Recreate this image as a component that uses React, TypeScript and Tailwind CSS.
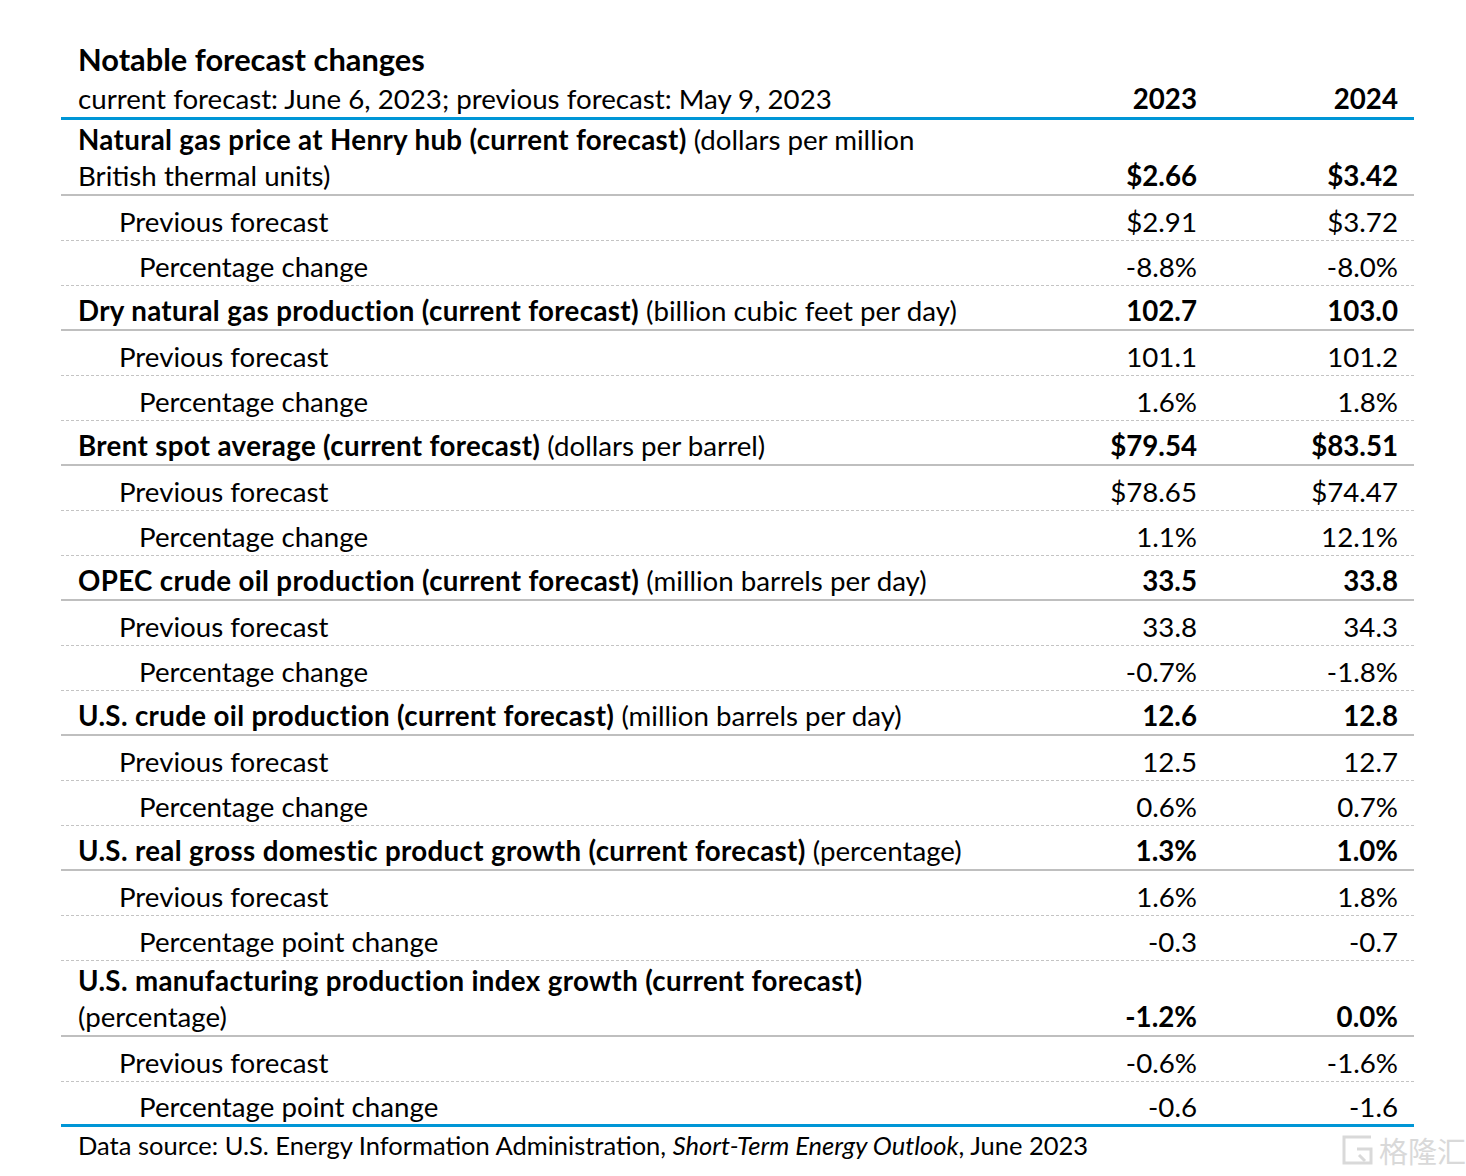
import React from "react";

type Row =
  | { kind: "main"; bold: string; rest: string; wrap?: string; v: [string, string] }
  | { kind: "prev"; label: string; v: [string, string] }
  | { kind: "pct"; label: string; v: [string, string]; last?: boolean };

const rows: Row[] = [
  { kind: "main", bold: "Natural gas price at Henry hub (current forecast)", rest: " (dollars per million", wrap: "British thermal units)", v: ["$2.66", "$3.42"] },
  { kind: "prev", label: "Previous forecast", v: ["$2.91", "$3.72"] },
  { kind: "pct", label: "Percentage change", v: ["-8.8%", "-8.0%"] },
  { kind: "main", bold: "Dry natural gas production (current forecast)", rest: " (billion cubic feet per day)", v: ["102.7", "103.0"] },
  { kind: "prev", label: "Previous forecast", v: ["101.1", "101.2"] },
  { kind: "pct", label: "Percentage change", v: ["1.6%", "1.8%"] },
  { kind: "main", bold: "Brent spot average (current forecast)", rest: " (dollars per barrel)", v: ["$79.54", "$83.51"] },
  { kind: "prev", label: "Previous forecast", v: ["$78.65", "$74.47"] },
  { kind: "pct", label: "Percentage change", v: ["1.1%", "12.1%"] },
  { kind: "main", bold: "OPEC crude oil production (current forecast)", rest: " (million barrels per day)", v: ["33.5", "33.8"] },
  { kind: "prev", label: "Previous forecast", v: ["33.8", "34.3"] },
  { kind: "pct", label: "Percentage change", v: ["-0.7%", "-1.8%"] },
  { kind: "main", bold: "U.S. crude oil production (current forecast)", rest: " (million barrels per day)", v: ["12.6", "12.8"] },
  { kind: "prev", label: "Previous forecast", v: ["12.5", "12.7"] },
  { kind: "pct", label: "Percentage change", v: ["0.6%", "0.7%"] },
  { kind: "main", bold: "U.S. real gross domestic product growth (current forecast)", rest: " (percentage)", v: ["1.3%", "1.0%"] },
  { kind: "prev", label: "Previous forecast", v: ["1.6%", "1.8%"] },
  { kind: "pct", label: "Percentage point change", v: ["-0.3", "-0.7"] },
  { kind: "main", bold: "U.S. manufacturing production index growth (current forecast)", rest: "", wrap: "(percentage)", v: ["-1.2%", "0.0%"] },
  { kind: "prev", label: "Previous forecast", v: ["-0.6%", "-1.6%"] },
  { kind: "pct", label: "Percentage point change", v: ["-0.6", "-1.6"], last: true },
];

const font = { fontFamily: "Lato, 'Noto Sans', sans-serif" };

function Values({ v, bold }: { v: [string, string]; bold?: boolean }) {
  return (
    <>
      <div className={`w-[201px] shrink-0 pr-4 text-right ${bold ? "font-bold" : ""}`}>{v[0]}</div>
      <div className={`w-[201px] shrink-0 pr-4 text-right ${bold ? "font-bold" : ""}`}>{v[1]}</div>
    </>
  );
}

function TableRow({ row }: { row: Row }) {
  if (row.kind === "main") {
    if (row.wrap) {
      return (
        <div className="flex h-[76px] items-end border-b-2 border-[#bfbfbf] leading-[36px]">
          <div className="flex-1 pl-[17px]">
            <div>
              <span className="font-bold tracking-[0.35px]">{row.bold}</span>
              {row.rest}
            </div>
            <div>{row.wrap}</div>
          </div>
          <Values v={row.v} bold />
        </div>
      );
    }
    return (
      <div className="flex h-[45px] items-center border-b-2 border-[#bfbfbf] pt-[6px]">
        <div className="flex-1 pl-[17px]">
          <span className="font-bold tracking-[0.35px]">{row.bold}</span>
          {row.rest}
        </div>
        <Values v={row.v} bold />
      </div>
    );
  }
  const indent = row.kind === "prev" ? "pl-[58px]" : "pl-[78px]";
  const border =
    row.kind === "pct" && row.last
      ? "border-b-[3px] border-solid border-[#0096d6]"
      : "border-b border-dashed border-[#c4c4c4]";
  return (
    <div className={`flex h-[45px] items-center pt-[7px] ${border}`}>
      <div className={`flex-1 ${indent}`}>{row.label}</div>
      <Values v={row.v} />
    </div>
  );
}

export default function App() {
  return (
    <div className="relative h-[1176px] w-[1466px] bg-white text-black" style={font}>
      <div className="ml-[61px] w-[1353px] pt-[42px] text-[27.7px] leading-[36px]">
        <div className="pl-[17px] text-[30.8px] font-bold leading-[36px]">Notable forecast changes</div>
        <div className="flex h-[42px] items-center border-b-[3px] border-[#0096d6] pt-[3px]">
          <div className="flex-1 pl-[17px]">current forecast: June 6, 2023; previous forecast: May 9, 2023</div>
          <Values v={["2023", "2024"]} bold />
        </div>
        {rows.map((r, i) => (
          <TableRow key={i} row={r} />
        ))}
        <div className="pl-[17px] pt-[2px] text-[25.5px] leading-[32px]">
          Data source: U.S. Energy Information Administration, <span className="italic">Short-Term Energy Outlook</span>, June 2023
        </div>
      </div>

      {/* watermark */}
      <div className="absolute left-[1341px] top-[1134px] flex items-center gap-[4px] text-[#d9d9d9]">
        <svg width="34" height="32" viewBox="0 0 34 32" fill="none" stroke="#d9d9d9" strokeWidth="3">
          <path d="M30 3H3v26h27V15H16" />
          <path d="M18 21l6 6" />
        </svg>
        <span className="text-[29px] leading-none" style={{ fontFamily: "'Noto Sans CJK SC', sans-serif" }}>
          格隆汇
        </span>
      </div>
    </div>
  );
}
